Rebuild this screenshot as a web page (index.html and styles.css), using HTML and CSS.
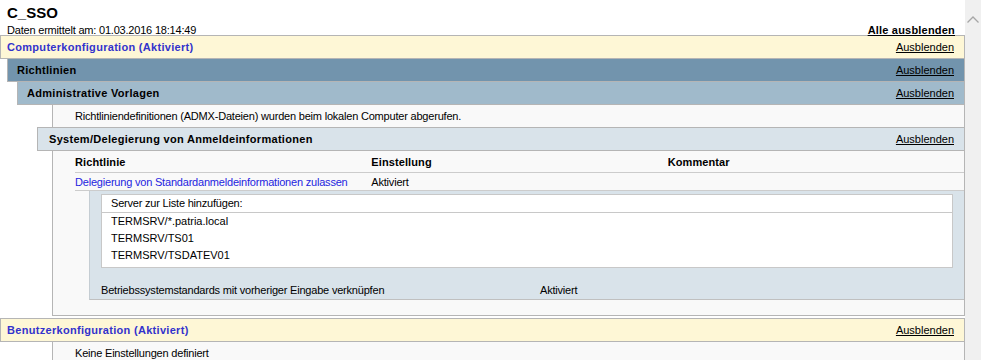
FILE: index.html
```html
<!DOCTYPE html>
<html lang="de">
<head>
  <meta charset="UTF-8">
  <title>C_SSO</title>
  <link rel="stylesheet" href="styles.css">
</head>
<body>

<div class="window">
  <div class="report">
    <div class="rpthdr">C_SSO</div>
    <div class="info-line">
      <span>Daten ermittelt am: 01.03.2016 18:14:49</span>
      <a class="expando all">Alle ausblenden</a>
    </div>

    <div class="he he0">
      <span>Computerkonfiguration (Aktiviert)</span>
      <a class="expando">Ausblenden</a>
    </div>
    <div class="he he1">
      <span>Richtlinien</span>
      <a class="expando">Ausblenden</a>
    </div>
    <div class="he he2">
      <span>Administrative Vorlagen</span>
      <a class="expando">Ausblenden</a>
    </div>
    <div class="he4i">
      <div class="line">Richtliniendefinitionen (ADMX-Dateien) wurden beim lokalen Computer abgerufen.</div>
    </div>
    <div class="he he3">
      <span>System/Delegierung von Anmeldeinformationen</span>
      <a class="expando">Ausblenden</a>
    </div>
    <div class="he4i he4i-table">
      <table class="info">
        <tr>
          <th>Richtlinie</th>
          <th>Einstellung</th>
          <th>Kommentar</th>
        </tr>
        <tr>
          <td><span class="explainlink">Delegierung von Standardanmeldeinformationen zulassen</span></td>
          <td>Aktiviert</td>
          <td></td>
        </tr>
        <tr>
          <td colspan="3" class="subcell">
            <div class="subtable">
              <div class="listbox">
                <div class="listhead">Server zur Liste hinzufügen:</div>
                <div class="listrow">TERMSRV/*.patria.local</div>
                <div class="listrow">TERMSRV/TS01</div>
                <div class="listrow">TERMSRV/TSDATEV01</div>
              </div>
              <div class="subrow">
                <span class="subname">Betriebssystemstandards mit vorheriger Eingabe verknüpfen</span>
                <span>Aktiviert</span>
              </div>
            </div>
          </td>
        </tr>
      </table>
    </div>

    <div class="he he0 he0-next">
      <span>Benutzerkonfiguration (Aktiviert)</span>
      <a class="expando">Ausblenden</a>
    </div>
    <div class="he4i">
      <div class="line">Keine Einstellungen definiert</div>
    </div>
  </div>

  <div class="scrollbar">
    <svg width="16" height="10" viewBox="0 0 16 10">
      <path d="M2.5 7.5 L8 2 L13.5 7.5" fill="none" stroke="#a6a6a6" stroke-width="1.3"/>
    </svg>
  </div>
</div>

</body>
</html>
```

FILE: styles.css
```css
body {
  margin: 0;
  font-family: "Liberation Sans", Arial, sans-serif;
  font-size: 11px;
  letter-spacing: -0.2px;
  color: #000;
  background: #fff;
}

.window {
  display: flex;
  width: 981px;
  height: 360px;
  overflow: hidden;
}

.report {
  width: 965px;
  flex: none;
}

.scrollbar {
  width: 16px;
  background: #f0f0f0;
  padding-top: 15px;
  box-sizing: border-box;
}

.scrollbar svg {
  display: block;
}

.rpthdr {
  font-size: 15px;
  font-weight: bold;
  letter-spacing: 0;
  line-height: 25px;
  padding-left: 7px;
}

.info-line {
  display: flex;
  justify-content: space-between;
  height: 10px;
  line-height: 11px;
  padding: 0 10px 0 7px;
}

.expando {
  color: #000;
  font-weight: normal;
  letter-spacing: 0;
  text-decoration: underline;
  cursor: pointer;
}

.expando.all {
  font-weight: bold;
  letter-spacing: 0.2px;
}

/* section header bars */
.he {
  display: flex;
  justify-content: space-between;
  align-items: center;
  height: 22px;
  border: 1px solid #b5b5b5;
  padding-right: 10px;
  font-weight: bold;
  letter-spacing: 0.3px;
}

.he + .he {
  margin-top: -1px;
}

.he0 {
  background: #fef7d6;
  color: #3333cc;
  padding-left: 6px;
}

.he0-next {
  margin-top: 2px;
}

.he1 {
  background: #7294ad;
  margin-left: 7px;
  padding-left: 9px;
}

.he2 {
  background: #a0bacb;
  margin-left: 17px;
  padding-left: 9px;
}

.he3 {
  background: #d9e3ea;
  margin-left: 37px;
  padding-left: 11px;
}

/* content blocks */
.he4i {
  background: #f9f9f9;
  border: 1px solid #b5b5b5;
  border-top: 0;
  border-bottom: 0;
  margin-left: 52px;
  padding-left: 22px;
}

.he4i .line {
  line-height: 22px;
}

.he4i-table {
  border-bottom: 1px solid #b5b5b5;
  padding-bottom: 15px;
}

.info {
  width: 100%;
  border-collapse: collapse;
  table-layout: fixed;
}

.info th,
.info td {
  padding: 0;
  text-align: left;
  vertical-align: middle;
  border-bottom: 1px solid #cccccc;
}

.info th {
  height: 21px;
  font-weight: bold;
  letter-spacing: 0.1px;
}

.info td {
  height: 17px;
}

.info td.subcell {
  padding-left: 14px;
  border-bottom: 0;
}

.explainlink {
  color: #2424e0;
}

.subtable {
  background: #d9e3ea;
  border-left: 1px solid #c5cdd3;
  border-bottom: 1px solid #c0c0c0;
  padding: 3px 11px 0 11px;
}

.listbox {
  background: #fff;
  border: 1px solid #c8c8c8;
  padding-bottom: 3px;
}

.listhead,
.listrow {
  height: 17px;
  line-height: 17px;
  padding-left: 9px;
}

.listrow {
  letter-spacing: 0;
}

.listhead {
  border-bottom: 1px solid #c8c8c8;
}

.subrow {
  display: flex;
  height: 17px;
  line-height: 17px;
  margin-top: 14px;
}

.subname {
  width: 439px;
  flex: none;
}
```
